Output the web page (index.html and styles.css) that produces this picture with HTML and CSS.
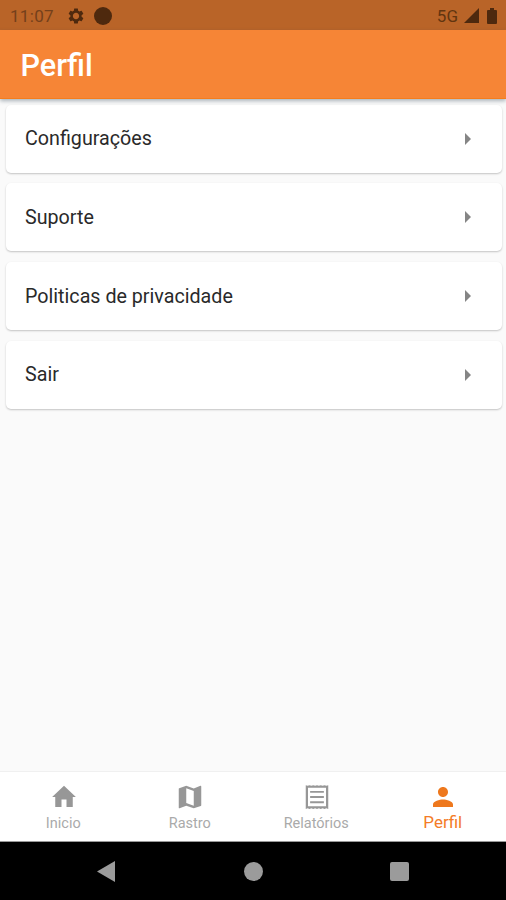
FILE: index.html
```html
<!DOCTYPE html>
<html lang="pt-BR">
<head>
<meta charset="utf-8">
<title>Perfil</title>
<link rel="stylesheet" href="styles.css">
</head>
<body>
<div class="status">
  <span class="clock">11:07</span>
  <svg class="gear" viewBox="0 0 24 24"><path d="M19.43 12.98c.04-.32.07-.64.07-.98s-.03-.66-.07-.98l2.11-1.65c.19-.15.24-.42.12-.64l-2-3.46c-.12-.22-.39-.3-.61-.22l-2.49 1c-.52-.4-1.08-.73-1.69-.98l-.38-2.65C14.46 2.18 14.25 2 14 2h-4c-.25 0-.46.18-.49.42l-.38 2.65c-.61.25-1.17.59-1.69.98l-2.49-1c-.23-.09-.49 0-.61.22l-2 3.46c-.13.22-.07.49.12.64l2.11 1.65c-.04.32-.07.65-.07.98s.03.66.07.98l-2.11 1.65c-.19.15-.24.42-.12.64l2 3.46c.12.22.39.3.61.22l2.49-1c.52.4 1.08.73 1.69.98l.38 2.65c.03.24.24.42.49.42h4c.25 0 .46-.18.49-.42l.38-2.65c.61-.25 1.17-.59 1.69-.98l2.49 1c.23.09.49 0 .61-.22l2-3.46c.12-.22.07-.49-.12-.64l-2.11-1.65zM12 16.2c-2.32 0-4.2-1.88-4.2-4.2s1.88-4.2 4.2-4.2 4.2 1.88 4.2 4.2-1.88 4.2-4.2 4.2z"/></svg>
  <span class="dot"></span>
  <span class="network">5G</span>
  <svg class="signal" viewBox="0 0 15 15"><path d="M15 0v15H0z"/></svg>
  <svg class="battery" viewBox="0 0 10 16"><path d="M3 0h4v2h2a1 1 0 0 1 1 1v12a1 1 0 0 1-1 1H1a1 1 0 0 1-1-1V3a1 1 0 0 1 1-1h2z"/></svg>
</div>
<header class="appbar"><h1>Perfil</h1></header>
<main class="list">
  <div class="card"><span>Configurações</span><svg class="arrow" viewBox="0 0 6 12"><path d="M0 0l6 6-6 6z"/></svg></div>
  <div class="card"><span>Suporte</span><svg class="arrow" viewBox="0 0 6 12"><path d="M0 0l6 6-6 6z"/></svg></div>
  <div class="card"><span>Politicas de privacidade</span><svg class="arrow" viewBox="0 0 6 12"><path d="M0 0l6 6-6 6z"/></svg></div>
  <div class="card"><span>Sair</span><svg class="arrow" viewBox="0 0 6 12"><path d="M0 0l6 6-6 6z"/></svg></div>
</main>
<nav class="tabs">
  <div class="tab"><svg viewBox="0 0 24 24"><path d="M10 20v-6h4v6h5v-8h2.500L12 3 2.500 12H5v8z"/></svg><span>Inicio</span></div>
  <div class="tab"><svg viewBox="0 0 24 24"><path d="M20.500 3l-.16.030L15 5.100 9 3 3.360 4.900c-.21.070-.36.250-.36.480V20.500c0 .280.220.500.500.500l.160-.030L9 18.900l6 2.100 5.640-1.900c.21-.070.360-.250.360-.480V3.500c0-.280-.220-.500-.500-.500zM15 19l-6-2.110V5l6 2.110V19z"/></svg><span>Rastro</span></div>
  <div class="tab"><svg viewBox="0 0 24 24"><path d="M19.500 3L18 2.500l-1.500.500-1.500-.500-1.500.500-1.500-.500-1.500.500L9 2.500 7.500 3 6 2.500 4.500 3 3 2.500v19l1.500-.500 1.500.500 1.500-.500 1.500.500 1.500-.500 1.500.500 1.500-.500 1.500.500 1.500-.500 1.500.500 1.500-.500 1.500.500v-19zM19.200 19.400H4.800V4.600h14.400zM6.500 15.400h11v1.500h-11zm0-4.150h11v1.500h-11zm0-4.150h11v1.500h-11z"/></svg><span>Relatórios</span></div>
  <div class="tab active"><svg viewBox="0 0 24 24"><path d="M12 12c2.210 0 4-1.790 4-4s-1.790-4-4-4-4 1.790-4 4 1.790 4 4 4zm0 2c-2.670 0-8 1.340-8 4v2h16v-2c0-2.660-5.330-4-8-4z"/></svg><span>Perfil</span></div>
</nav>
<div class="system">
  <svg class="back" viewBox="0 0 18 21"><path d="M18 0v21L0 10.500z"/></svg>
  <span class="home"></span>
  <span class="recent"></span>
</div>
</body>
</html>
```

FILE: styles.css
```css
* { box-sizing: border-box; }
body {
  margin: 0;
  height: 900px;
  display: flex;
  flex-direction: column;
  overflow: hidden;
  background: #fafafa;
  font-family: Roboto, "Liberation Sans", sans-serif;
}
svg { display: block; flex: none; fill: currentColor; }
.status {
  height: 30px;
  flex: none;
  display: flex;
  align-items: center;
  padding: 1px 9px 0 10px;
  background: #b96428;
  color: #4e290e;
  font-size: 17px;
}
.clock { width: 57px; letter-spacing: .3px; color: #74401b; }
.gear { width: 18px; height: 18px; }
.dot { width: 18px; height: 18px; margin-left: 9px; border-radius: 50%; background: #4e290e; }
.network { margin-left: auto; color: #62350f; }
.signal { width: 15px; height: 15px; margin-left: 6px; }
.battery { width: 10px; height: 16px; margin-left: 8px; }
.appbar {
  position: relative;
  height: 69px;
  flex: none;
  display: flex;
  align-items: center;
  padding: 3px 0 0 20.5px;
  background: #f68536;
  border-bottom: 1px solid #f57d1c;
  box-shadow: 0 2px 4px rgba(40, 60, 80, .38);
}
h1 { margin: 0; color: #fff; font-size: 30.6px; font-weight: 500; line-height: 36px; }
.list {
  flex: 1;
  display: flex;
  flex-direction: column;
  gap: 10.75px;
  padding: 5.5px 4px 0 6px;
}
.card {
  height: 68px;
  display: flex;
  align-items: center;
  justify-content: space-between;
  padding: 0 31.5px 0 19px;
  background: #fff;
  border-radius: 5px;
  box-shadow: 0 1px 2px rgba(0, 0, 0, .22);
  color: #2a2a2a;
  font-size: 19.7px;
}
.arrow { width: 6px; height: 12px; color: #858585; }
.tabs {
  height: 71px;
  flex: none;
  display: flex;
  background: #fff;
  border-top: 1px solid #f0f0f0;
  border-bottom: 1px solid #999;
}
.tab {
  flex: 1;
  display: flex;
  flex-direction: column;
  align-items: center;
  padding: 10px 0 0;
  color: #979797;
  font-size: 14.5px;
  line-height: 20px;
}
.tab svg { width: 30px; height: 30px; margin-left: 1px; }
.tab span { margin-top: 2px; color: #aaa; }
.tab.active { color: #ee781d; font-size: 17px; }
.tab.active span { margin-top: 0; color: #f47c28; }
.system {
  height: 58px;
  flex: none;
  display: flex;
  align-items: center;
  background: #000;
  color: #9b9b9b;
  padding-left: 97px;
}
.back { width: 18px; height: 21px; }
.home { width: 19px; height: 19px; margin-left: 129px; border-radius: 50%; background: #9b9b9b; }
.recent { width: 19px; height: 19px; margin-left: 127px; border-radius: 2px; background: #9b9b9b; }
```
